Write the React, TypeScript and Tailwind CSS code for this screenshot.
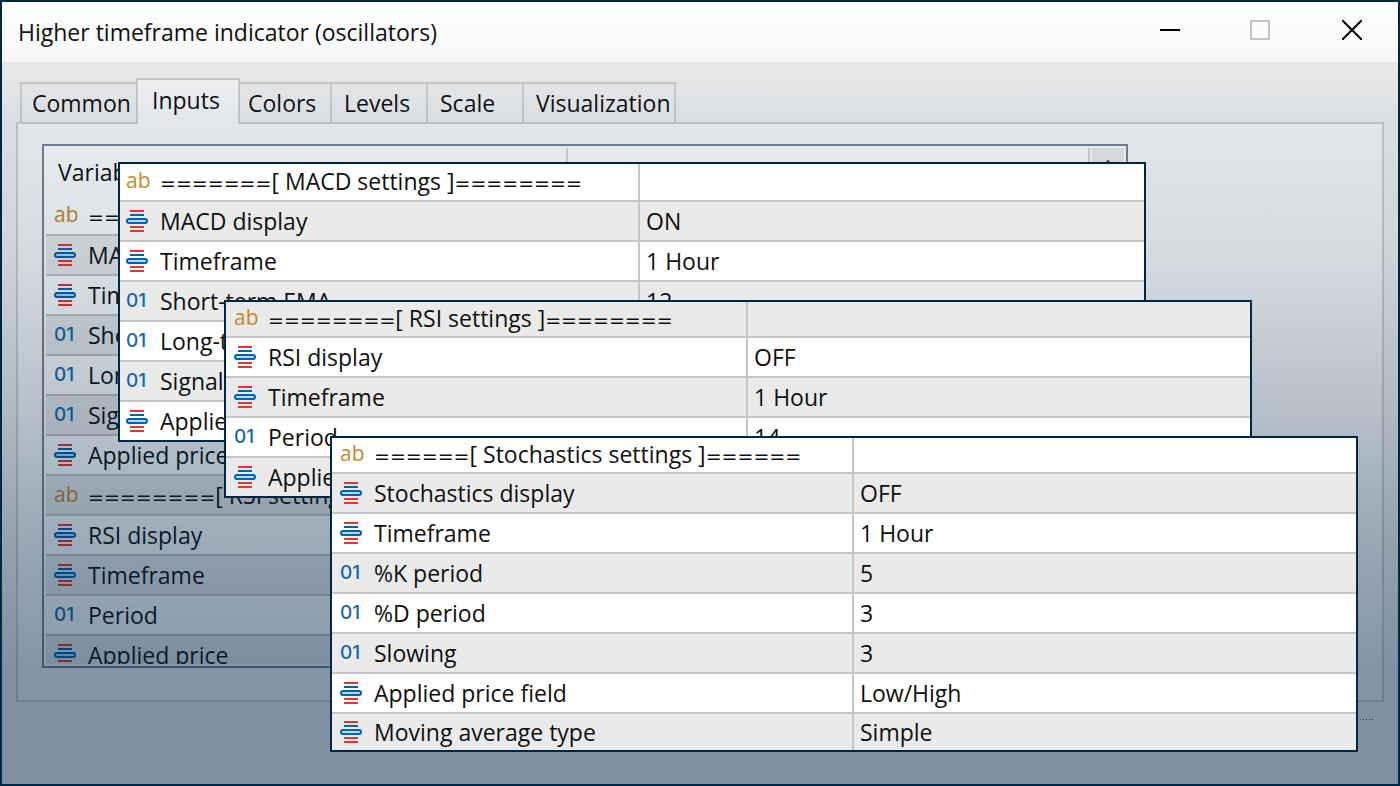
import clsx from 'clsx';

type Kind = 'text' | 'enum' | 'number';

type Row = {
    kind: Kind;
    name: string;
    value?: string;
    before?: string;
    after?: string;
};

const tabs = [
    { label: 'Common', className: 'w-[116px] pl-[10px]' },
    { label: 'Inputs', active: true, className: 'w-[104px] pl-[14px]' },
    { label: 'Colors', className: 'w-[92px] pl-[8px]' },
    { label: 'Levels', className: 'w-[96px] pl-[12px]' },
    { label: 'Scale', className: 'w-[96px] pl-[12px]' },
    { label: 'Visualization', className: 'w-[152px] pl-[12px]' },
];

const macdRows: Row[] = [
    { kind: 'text', name: '[ MACD settings ]', before: '=======', after: '========' },
    { kind: 'enum', name: 'MACD display', value: 'ON' },
    { kind: 'enum', name: 'Timeframe', value: '1 Hour' },
    { kind: 'number', name: 'Short-term EMA', value: '12' },
    { kind: 'number', name: 'Long-term EMA', value: '26' },
    { kind: 'number', name: 'Signal', value: '9' },
    { kind: 'enum', name: 'Applied price', value: 'Close' },
];

const rsiRows: Row[] = [
    { kind: 'text', name: '[ RSI settings ]', before: '========', after: '========' },
    { kind: 'enum', name: 'RSI display', value: 'OFF' },
    { kind: 'enum', name: 'Timeframe', value: '1 Hour' },
    { kind: 'number', name: 'Period', value: '14' },
    { kind: 'enum', name: 'Applied price', value: 'Close' },
];

const stochRows: Row[] = [
    { kind: 'text', name: '[ Stochastics settings ]', before: '======', after: '======' },
    { kind: 'enum', name: 'Stochastics display', value: 'OFF' },
    { kind: 'enum', name: 'Timeframe', value: '1 Hour' },
    { kind: 'number', name: '%K period', value: '5' },
    { kind: 'number', name: '%D period', value: '3' },
    { kind: 'number', name: 'Slowing', value: '3' },
    { kind: 'enum', name: 'Applied price field', value: 'Low/High' },
    { kind: 'enum', name: 'Moving average type', value: 'Simple' },
];

function KindIcon({ kind }: { kind: Kind }) {
    if (kind === 'text') {
        return <span className="w-[22px] shrink-0 pb-[2px] font-['Open_Sans',sans-serif] text-[21px] leading-6 text-[#c58a26]">ab</span>;
    }
    if (kind === 'number') {
        return <span className="w-[22px] shrink-0 font-['Inter',sans-serif] text-[19px] leading-6 font-medium text-[#1769a8]">01</span>;
    }
    return (
        <svg className="shrink-0" width="22" height="22" viewBox="0 0 22 22" aria-hidden="true">
            <path d="M4 0h14v2H4zM4 16h14v2H4zM4 20h14v2H4z" fill="#e0382f" />
            <path d="M4 4h14v2H4z" fill="#0062ac" />
            <rect x="1" y="9" width="20" height="4" rx="2" fill="#a9ddff" stroke="#0062ac" strokeWidth="2" />
        </svg>
    );
}

function RowName({ row }: { row: Row }) {
    return (
        <div className="flex items-center gap-3">
            <KindIcon kind={row.kind} />
            <span className="whitespace-pre">
                {row.before && <Rule text={row.before} />}
                {row.name}
                {row.after && <Rule text={row.after} />}
            </span>
        </div>
    );
}

function Rule({ text }: { text: string }) {
    return <span className="font-['DejaVu_Sans',sans-serif] text-[19px] leading-6">{text}</span>;
}

type SheetProps = {
    rows: Row[];
    label: string;
    className: string;
    colWidth: string;
    iconPad: string;
    firstGray?: boolean;
    firstHeight: string;
    lastHeight: string;
};

function Sheet({ rows, label, className, colWidth, iconPad, firstGray, firstHeight, lastHeight }: SheetProps) {
    return (
        <div className={clsx('absolute overflow-hidden border-2 border-[#002844] bg-white', className)}>
            <table aria-label={label} className="w-full table-fixed border-separate border-spacing-0">
                <colgroup>
                    <col className={colWidth} />
                    <col />
                </colgroup>
                <tbody>
                    {rows.map((row, i) => {
                        const last = i === rows.length - 1;
                        return (
                            <tr
                                key={i}
                                className={clsx(
                                    i === 0 ? firstHeight : last ? lastHeight : 'h-10',
                                    (i % 2 === 0) === !!firstGray ? 'bg-[#eaeaea]' : 'bg-white',
                                )}
                            >
                                <td
                                    className={clsx(
                                        'border-r-2 border-[#c6c6c6] p-0',
                                        iconPad,
                                        !last && 'border-b-2',
                                        i === 0 && 'pb-[2px]',
                                    )}
                                >
                                    <RowName row={row} />
                                </td>
                                <td className={clsx('border-[#c6c6c6] p-0 pl-[6px]', !last && 'border-b-2')}>{row.value}</td>
                            </tr>
                        );
                    })}
                </tbody>
            </table>
        </div>
    );
}

function TitleBar() {
    return (
        <header className="flex h-[60px] items-start justify-between bg-white pl-4">
            <h1 className="pt-[14px]">Higher timeframe indicator (oscillators)</h1>
            <div className="flex">
                <button aria-label="Minimize" className="flex h-[56px] w-[88px] items-center justify-center">
                    <span className="h-[2px] w-5 bg-black" />
                </button>
                <button aria-label="Maximize" disabled className="flex h-[56px] w-[92px] items-center justify-center">
                    <span className="size-5 border-2 border-[#c8c8c8]" />
                </button>
                <button aria-label="Close" className="flex h-[56px] w-[92px] items-center justify-center">
                    <svg width="20" height="20" viewBox="0 0 20 20" stroke="#000" strokeWidth="2" aria-hidden="true">
                        <path d="M0 0l20 20M20 0L0 20" />
                    </svg>
                </button>
            </div>
        </header>
    );
}

function TabBar() {
    return (
        <div role="tablist" className="relative z-10 ml-1 flex items-end">
            {tabs.map((tab) => (
                <button
                    key={tab.label}
                    role="tab"
                    aria-selected={!!tab.active}
                    className={clsx(
                        'border-[#cfcfcf] text-left',
                        tab.className,
                        tab.active
                            ? '-mb-[2px] h-[46px] border-x-2 border-t-2 bg-[#f9f9f9] pb-1'
                            : 'h-10 border-t-2 border-r-2 bg-[#f0f0f0] first:border-l-2 first:border-r-0',
                    )}
                >
                    {tab.label}
                </button>
            ))}
        </div>
    );
}

function InputsList() {
    const rows = [...macdRows, ...rsiRows];

    return (
        <div className="mr-[230px] h-[524px] overflow-hidden border-2 border-[#7c8494] bg-white p-[2px]">
            <div className="flex h-12">
                <div className="w-[522px] border-r-2 border-[#d9d9d9] pt-2 pl-3">Variable</div>
                <div className="grow border-r-2 border-[#d9d9d9] pt-2 pl-2">Value</div>
                <button aria-label="Scroll up" className="ml-[2px] flex h-10 w-8 justify-center bg-[#ededed] pt-3">
                    <svg width="14" height="8" viewBox="0 0 14 8" fill="none" stroke="#505860" strokeWidth="2" aria-hidden="true">
                        <path d="M1 7l6-6 6 6" />
                    </svg>
                </button>
            </div>
            <div className="h-[468px] overflow-hidden">
                {rows.map((row, i) => (
                    <div
                        key={i}
                        className={clsx(
                            'flex h-10 items-center border-b-2 border-[#c6c6c6] pl-2',
                            i % 2 === 0 ? 'bg-white' : 'bg-[#eaeaea]',
                        )}
                    >
                        <div className="w-[514px]">
                            <RowName row={row} />
                        </div>
                        <span>{row.value}</span>
                    </div>
                ))}
            </div>
        </div>
    );
}

export default function App() {
    return (
        <div className="relative flex min-h-screen flex-col overflow-hidden border-2 border-[#002844] bg-[#f0f0f0] font-['Open_Sans',sans-serif] text-[23px] leading-8 text-[#101010]">
            <TitleBar />
            <main className="grow px-[14px] pt-4">
                <TabBar />
                <section className="h-[580px] border-2 border-[#cfcfcf] bg-[#f9f9f9] px-6 pt-5">
                    <InputsList />
                </section>
                {/* Dotted edge of the button row */}
                <div className="mt-[17px] mr-[11px] ml-auto h-px w-[160px] bg-[repeating-linear-gradient(to_left,#505860_0px,#505860_1px,transparent_1px,transparent_3px)]" />
            </main>

            {/* Shade that gets stronger towards the bottom */}
            <div className="pointer-events-none absolute inset-0 z-20 bg-[linear-gradient(to_bottom,rgba(0,38,72,0)_0%,rgba(0,38,72,0.04)_8%,rgba(0,38,72,0.09)_16%,rgba(0,38,72,0.14)_32%,rgba(0,38,72,0.29)_55%,rgba(0,38,72,0.39)_69%,rgba(0,38,72,0.47)_85%,rgba(0,38,72,0.47)_100%)]" />

            <div className="absolute inset-0 z-30">
                <Sheet
                    rows={macdRows}
                    label="MACD settings"
                    className="top-[160px] right-[252px] left-[116px]"
                    colWidth="w-[520px]"
                    iconPad="pl-[6px]"
                    firstHeight="h-[38px]"
                    lastHeight="h-[38px]"
                />
                <Sheet
                    rows={rsiRows}
                    label="RSI settings"
                    className="top-[298px] right-[146px] left-[222px]"
                    colWidth="w-[522px]"
                    iconPad="pl-2"
                    firstGray
                    firstHeight="h-9"
                    lastHeight="h-[38px]"
                />
                <Sheet
                    rows={stochRows}
                    label="Stochastics settings"
                    className="top-[434px] right-[40px] left-[328px]"
                    colWidth="w-[522px]"
                    iconPad="pl-2"
                    firstHeight="h-9"
                    lastHeight="h-9"
                />
            </div>
        </div>
    );
}
